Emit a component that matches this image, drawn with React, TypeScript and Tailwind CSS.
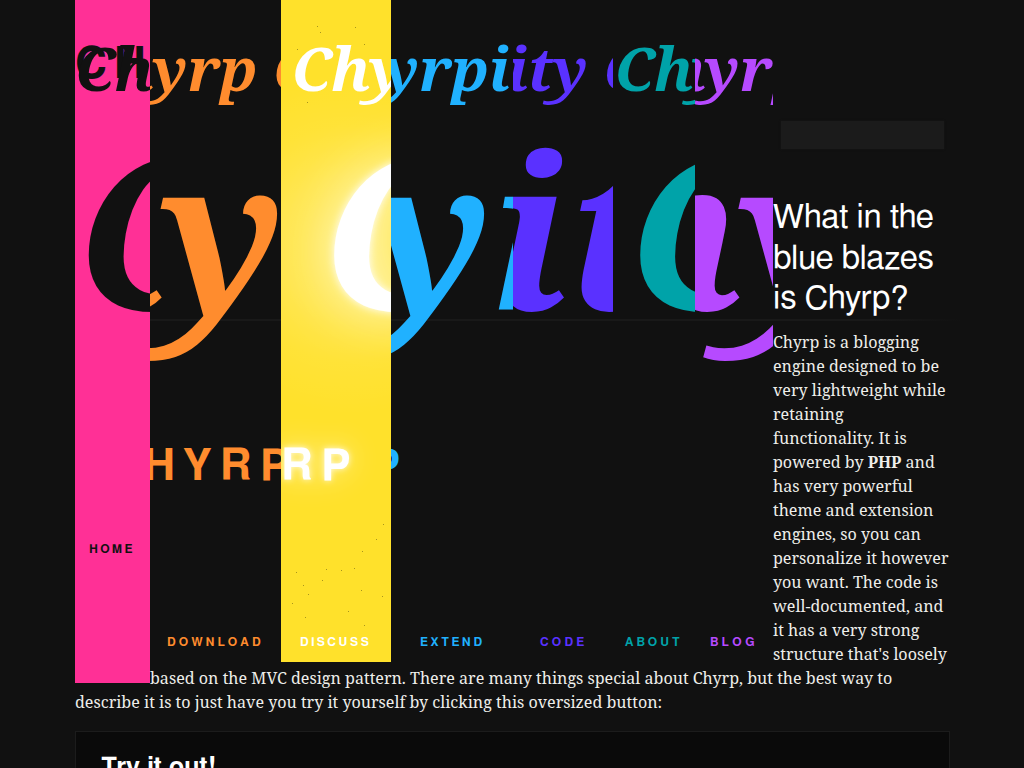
type Word = {
  text: string;
  x: number;
  y: number;
  size: number;
  sans?: boolean;
  glow?: string;
};

type Strip = {
  label: string;
  x: number;
  width: number;
  box: string;
  labelClass: string;
  words: Word[];
};

const wideGlow = '[filter:drop-shadow(0_0_4px_#fff)_drop-shadow(0_0_26px_#fffbd0)]';
const tightGlow = '[filter:drop-shadow(0_0_3px_#ffffffcc)_drop-shadow(0_0_14px_#ffffff80)]';

const strips: Strip[] = [
  {
    label: 'Home', x: 75, width: 75,
    box: 'w-[75px] h-[683px] bg-[#ff3096] text-[#111]',
    labelClass: 'top-[542px] left-[14px] tracking-[2.7px]',
    words: [
      { text: 'CH', x: 75.3, y: 78, size: 44, sans: true },
      { text: 'Ch', x: 75, y: 91.3, size: 59.5 },
      { text: 'C', x: 75.5, y: 310, size: 210 },
    ],
  },
  {
    label: 'Download', x: 150, width: 131,
    box: 'w-[131px] h-[662px] text-[#ff8c2e]',
    labelClass: 'top-[635px] left-[17px] tracking-[3.4px]',
    words: [
      { text: 'Chyrp C', x: 75, y: 91.3, size: 59.5 },
      { text: 'Chy', x: -113, y: 310, size: 210 },
      { text: 'CHYRP', x: 104.5, y: 479.5, size: 44, sans: true },
    ],
  },
  {
    label: 'Discuss', x: 281, width: 110,
    box: 'w-[110px] h-[662px] bg-[#ffe12b] text-white',
    labelClass: 'top-[635px] left-[19px] tracking-[2.6px]',
    words: [
      { text: 'Chy', x: 291.5, y: 91.3, size: 59.5 },
      { text: 'C', x: 321, y: 310, size: 210, glow: wideGlow },
      { text: 'RP', x: 281, y: 479.5, size: 44, sans: true, glow: tightGlow },
    ],
  },
  {
    label: 'Extend', x: 391, width: 122,
    box: 'w-[122px] h-[662px] text-[#20b1ff]',
    labelClass: 'top-[635px] left-[29px] tracking-[2.8px]',
    words: [
      { text: 'Chyrpi', x: 306.5, y: 91.3, size: 59.5 },
      { text: 'Chyr', x: 94, y: 310, size: 210 },
      { text: 'P', x: 370.5, y: 479.5, size: 44, sans: true },
    ],
  },
  {
    label: 'Code', x: 513, width: 100,
    box: 'w-[100px] h-[662px] text-[#5a31ff]',
    labelClass: 'top-[635px] left-[27px] tracking-[3.4px]',
    words: [
      { text: 'ity C', x: 507, y: 91.3, size: 59.5 },
      { text: 'i', x: 493, y: 310, size: 210 },
      { text: 't', x: 567.5, y: 310, size: 210 },
    ],
  },
  {
    label: 'About', x: 613, width: 82,
    box: 'w-[82px] h-[662px] text-[#00a3a9]',
    labelClass: 'top-[635px] left-[12px] tracking-[3.1px]',
    words: [
      { text: 'Chy', x: 614.5, y: 91.3, size: 59.5 },
      { text: 'C', x: 627, y: 310, size: 210 },
    ],
  },
  {
    label: 'Blog', x: 695, width: 78,
    box: 'w-[78px] h-[662px] text-[#b64aff]',
    labelClass: 'top-[635px] left-[15px] tracking-[3.7px]',
    words: [
      { text: 'Chyrp', x: 627, y: 91.3, size: 59.5 },
      { text: 'hy', x: 605, y: 310, size: 210 },
    ],
  },
];

const specks = [
  [317, 26], [355, 27], [320, 32], [364, 44], [297, 49], [307, 102],
  [383, 524], [376, 539], [362, 551], [326, 569], [341, 570], [354, 568], [296, 572],
  [322, 580], [303, 585], [361, 590], [308, 594], [382, 596], [292, 603], [348, 611], [305, 617], [364, 625],
];

function Artwork({ strip }: { strip: Strip }) {
  return (
    <svg
      className="block overflow-hidden fill-current"
      width={strip.width}
      height={530}
      viewBox={`${strip.x} 0 ${strip.width} 530`}
      aria-hidden="true"
    >
      {strip.label === 'Discuss' && (
        <>
          <defs>
            <radialGradient id="halo" gradientUnits="userSpaceOnUse" cx="350" cy="244" r="170">
              <stop offset="0" stopColor="#fff" stopOpacity="0.25" />
              <stop offset="0.4" stopColor="#fff" stopOpacity="0.18" />
              <stop offset="0.7" stopColor="#fff" stopOpacity="0.06" />
              <stop offset="1" stopColor="#fff" stopOpacity="0" />
            </radialGradient>
          </defs>
          <rect x="281" y="0" width="110" height="530" fill="url(#halo)" />
        </>
      )}
      {strip.words.map((w) => (
        <text
          key={w.text + w.size}
          x={w.x}
          y={w.y}
          fontSize={w.size}
          className={[
            w.sans
              ? "font-['FreeSans','Liberation_Sans',sans-serif] font-bold tracking-[8.3px]"
              : "font-['Noto_Serif',serif] font-bold italic",
            w.glow ?? '',
          ].join(' ')}
        >
          {w.text}
        </text>
      ))}
    </svg>
  );
}

export default function App() {
  return (
    <div className="h-screen overflow-hidden bg-[#111] font-['Noto_Serif',serif] text-[16.08px] leading-[24px] text-[#eeeeea]">
      <div className="relative ml-[75px] w-[875px]">
        <div className="absolute top-[319px] left-0 h-[2px] w-[886px] bg-linear-to-r from-[#191919] from-90% to-[#111]" />
        <nav>
          {strips.map((s) => (
            <a key={s.label} className={`relative float-left block ${s.box}`}>
              <Artwork strip={s} />
              {s.label === 'Discuss' && (
                <svg className="absolute inset-0" width="110" height="662" viewBox="281 0 110 662" aria-hidden="true">
                  {specks.map(([x, y]) => (
                    <rect key={`${x}-${y}`} x={x} y={y} width="1" height="1" fill="#a8941d" />
                  ))}
                </svg>
              )}
              <span
                className={`absolute whitespace-nowrap font-['FreeSans','Liberation_Sans',sans-serif] text-[12px] leading-[15px] font-bold uppercase ${s.labelClass}`}
              >
                {s.label}
              </span>
            </a>
          ))}
        </nav>
        <div className="flex h-[199px] pt-[121px] pl-[8px]">
          <input
            aria-label="Search"
            className="h-[28px] w-[163px] bg-[#1b1b1b] shadow-[0_0_2px_#181818] outline-none"
          />
        </div>
        <h1 className="relative font-['FreeSans','Liberation_Sans',sans-serif] text-[33px] leading-[40.5px] font-normal text-white">
          What in the blue blazes is Chyrp?
        </h1>
        <p className="relative mt-[9.5px]">
          Chyrp is a blogging engine designed to be very lightweight while retaining
          <br />
          functionality. It is powered by <strong className="font-bold">PHP</strong> and has very powerful theme and
          extension engines, so you can personalize it however you want. The code is well-documented, and it has a very
          strong structure that's loosely based on the MVC design pattern. There are many things special about Chyrp,
          but the best way to
          <br />
          describe it is to just have you try it yourself by clicking this oversized button:
        </p>
        <a className="clear-both mt-[17px] block h-[90px] border border-[#1c1c1c] bg-[#0a0a0a] pt-[20px] pl-[25px]">
          <span className="font-['FreeSans','Liberation_Sans',sans-serif] text-[25.2px] leading-[32px] font-bold text-white">
            Try it out!
          </span>
        </a>
      </div>
    </div>
  );
}
